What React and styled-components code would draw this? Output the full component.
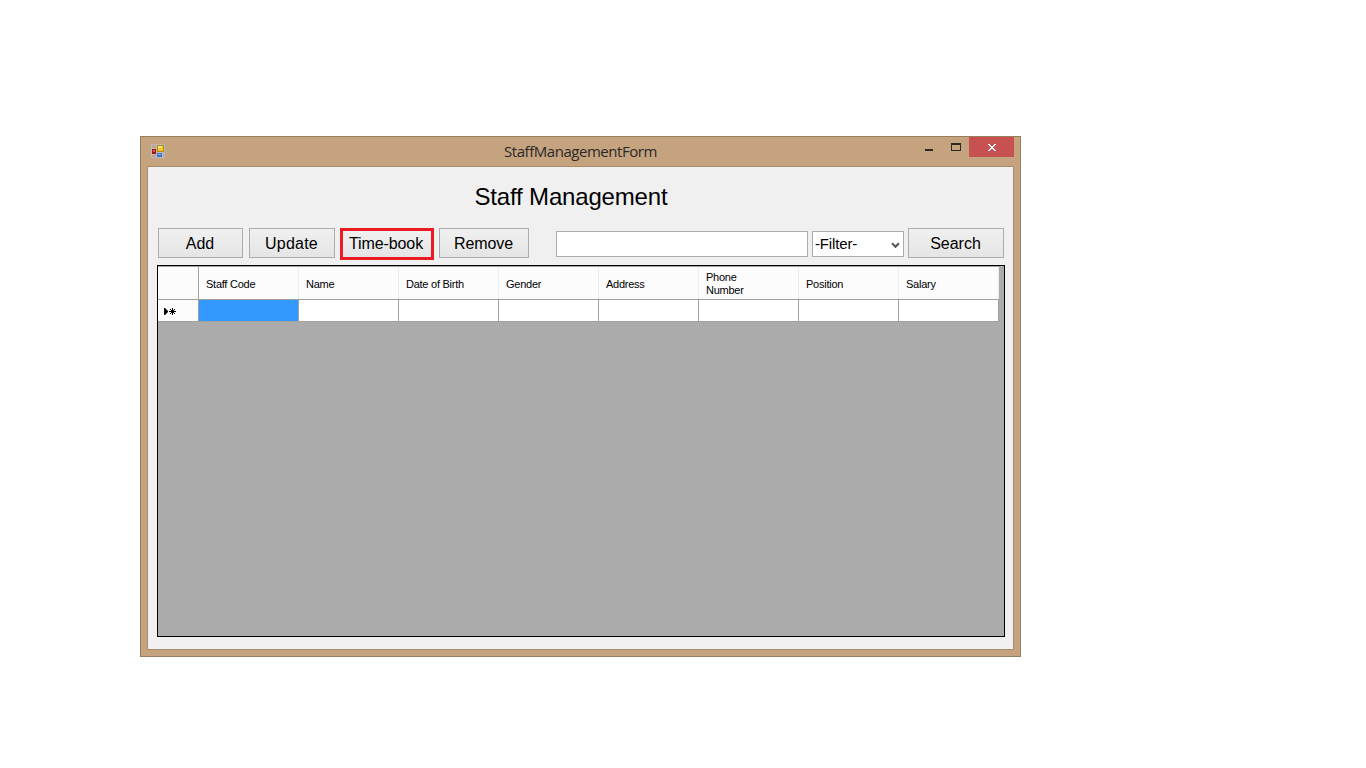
import React from 'react';
import styled, { createGlobalStyle } from 'styled-components';

const Global = createGlobalStyle`
  * { box-sizing: border-box; }
  body { margin: 0; background: #fff; overflow: hidden; }
  button, input { font: inherit; color: inherit; }
`;

const Desktop = styled.div`
  width: 1366px;
  height: 768px;
  padding: 136px 0 0 140px;
  background: #fff;
  font-family: 'Liberation Sans', Arial, sans-serif;
  color: #000;
`;

const Window = styled.main`
  width: 881px;
  height: 521px;
  border: 1px solid #977e5f;
  background: #c4a37e;
  display: flex;
  flex-direction: column;
  padding: 0 6px 6px;
`;

const TitleBar = styled.header`
  height: 29px;
  display: grid;
  grid-template-columns: 100px 1fr 100px;
`;

const AppIcon = styled.svg`
  display: block;
  margin: 7px 0 0 4px;
`;

const Caption = styled.div`
  font: 15px/29px 'Open Sans', 'Noto Sans', sans-serif;
  letter-spacing: -0.46px;
  color: #2b2826;
  text-align: center;
  white-space: nowrap;
`;

const WindowButtons = styled.div`
  display: flex;
  justify-content: flex-end;
`;

const WindowButton = styled.button`
  width: ${(p) => p.$width}px;
  height: 20px;
  padding: 0;
  border: 0;
  background: ${(p) => (p.$close ? '#c75050' : 'transparent')};
  svg { display: block; }
`;

const Client = styled.section`
  flex: 1;
  border: 1px solid #a98c69;
  background: #f0f0f0;
  padding: 0 8px 0 9px;
  display: flex;
  flex-direction: column;
`;

const Heading = styled.h1`
  margin: 0;
  height: 61px;
  font-size: 24px;
  font-weight: 400;
  line-height: 59px;
  letter-spacing: -0.17px;
  text-align: center;
  padding-right: 20px;
`;

const Toolbar = styled.div`
  display: flex;
  align-items: flex-start;
  height: 37px;
  padding-left: 1px;
`;

const Button = styled.button`
  width: ${(p) => p.$width}px;
  height: ${(p) => (p.$marked ? 32 : 30)}px;
  margin-right: ${(p) => p.$gap || 0}px;
  padding: ${(p) => (p.$marked ? '0 2px 0 0' : '2px 1px 0 0')};
  border: ${(p) => (p.$marked ? '3px solid #ed1c24' : '1px solid #acacac')};
  background: linear-gradient(#f0f0f0, #e5e5e5);
  font-size: 16px;
  letter-spacing: ${(p) => p.$spacing || 0}px;
  white-space: nowrap;
`;

const SearchInput = styled.input`
  width: 252px;
  height: 26px;
  margin: 3px 4px 0 0;
  border: 1px solid #abadb3;
  background: #fff;
  outline: 0;
`;

const Filter = styled.div`
  width: 92px;
  height: 26px;
  margin: 3px 4px 0 0;
  padding: 0 3px 0 2px;
  border: 1px solid #acacac;
  background: #fff;
  display: flex;
  align-items: center;
  justify-content: space-between;
  font-size: 15px;
  letter-spacing: -0.15px;
  svg { margin-top: 2px; }
  span { padding-bottom: 1px; }
`;

const Grid = styled.div`
  width: 848px;
  height: 372px;
  border: 1px solid #000;
  background: #ababab;
`;

const HeaderRow = styled.div`
  width: 841px;
  height: 34px;
  display: grid;
  grid-template-columns: 41px repeat(8, 100px);
  border-top: 1px solid #a0a0a0;
  border-bottom: 1px solid #a0a0a0;
  background: #fcfcfd;
`;

const HeaderCell = styled.div`
  display: flex;
  align-items: center;
  padding: 2px 30px 0 7px;
  border-right: 1px solid ${(p) => (p.$corner ? '#a0a0a0' : '#e4effb')};
  font-size: 11px;
  line-height: 13px;
  letter-spacing: -0.25px;
`;

const DataRow = styled(HeaderRow)`
  height: 22px;
  border-top: 0;
`;

const Cell = styled.div`
  border-right: 1px solid #a0a0a0;
  background: ${(p) => (p.$selected ? '#3399ff' : '#fff')};
`;

const RowMarker = styled(Cell)`
  background: #fcfcfd;
  padding: 7px 0 0 6px;
  svg { display: block; }
`;

const columns = ['Staff Code', 'Name', 'Date of Birth', 'Gender', 'Address', 'Phone Number', 'Position', 'Salary'];

function FormIcon() {
  return (
    <AppIcon width="14" height="14" shapeRendering="crispEdges">
      <path d="M0 0h14v14H0z" fill="#b9bbbc" />
      <path d="M1 1h4v3H1zM1 11h4v2H1zM12 9h1v4h-1z" fill="#c4a37e" />
      <path d="M1 5h4v5H1z" fill="#9d1515" />
      <path d="M2 6h2v2H2z" fill="#e2564b" />
      <path d="M6 1h7v7H6z" fill="#b98608" />
      <path d="M7 2h5v5H7z" fill="#f8c526" />
      <path d="M7 2h4v2H7z" fill="#ffe887" />
      <path d="M6 9h5v4H6z" fill="#3d70d0" />
      <path d="M7 10h3v1H7z" fill="#86b6ff" />
    </AppIcon>
  );
}

export default function App() {
  return (
    <>
      <Global />
      <Desktop>
        <Window>
          <TitleBar>
            <FormIcon />
            <Caption>StaffManagementForm</Caption>
            <WindowButtons>
              <WindowButton $width={27} aria-label="Minimize">
                <svg width="27" height="20" shapeRendering="crispEdges"><path d="M10 12h8v2h-8z" fill="#2b2826" /></svg>
              </WindowButton>
              <WindowButton $width={27} aria-label="Maximize">
                <svg width="27" height="20" shapeRendering="crispEdges"><path d="M9 6h10v8H9zM10 8v5h8V8z" fill="#2b2826" fillRule="evenodd" /></svg>
              </WindowButton>
              <WindowButton $width={45} $close aria-label="Close">
                <svg width="45" height="20" shapeRendering="crispEdges">
                  <path d="M19 7h2v1h1v1h2V8h1V7h2v1h-1v1h-1v1h-1v1h1v1h1v1h1v1h-2v-1h-1v-1h-2v1h-1v1h-2v-1h1v-1h1v-1h1v-1h-1V9h-1V8h-1z" fill="#fff" />
                </svg>
              </WindowButton>
            </WindowButtons>
          </TitleBar>
          <Client>
            <Heading>Staff Management</Heading>
            <Toolbar>
              <Button $width={85} $gap={6}>Add</Button>
              <Button $width={86} $gap={5} $spacing={0.2}>Update</Button>
              <Button $width={94} $gap={5} $spacing={-0.1} $marked>Time-book</Button>
              <Button $width={90} $gap={27} $spacing={-0.1}>Remove</Button>
              <SearchInput aria-label="Search text" />
              <Filter>
                <span>-Filter-</span>
                <svg width="9" height="7"><path d="M1 1.2l3.5 3.6L8 1.2" fill="none" stroke="#555" strokeWidth="2" /></svg>
              </Filter>
              <Button $width={96}>Search</Button>
            </Toolbar>
            <Grid>
              <HeaderRow>
                <HeaderCell $corner />
                {columns.map((name) => <HeaderCell key={name}>{name}</HeaderCell>)}
              </HeaderRow>
              <DataRow>
                <RowMarker>
                  <svg width="13" height="9">
                    <path d="M0 1h1l3 3v1L1 8H0z" fill="#000" />
                    <path d="M8.5 1v7M5 4.5h7M6 2l5 5M11 2L6 7" stroke="#000" strokeWidth="1" />
                  </svg>
                </RowMarker>
                {columns.map((name, i) => <Cell key={name} $selected={i === 0} />)}
              </DataRow>
            </Grid>
          </Client>
        </Window>
      </Desktop>
    </>
  );
}
